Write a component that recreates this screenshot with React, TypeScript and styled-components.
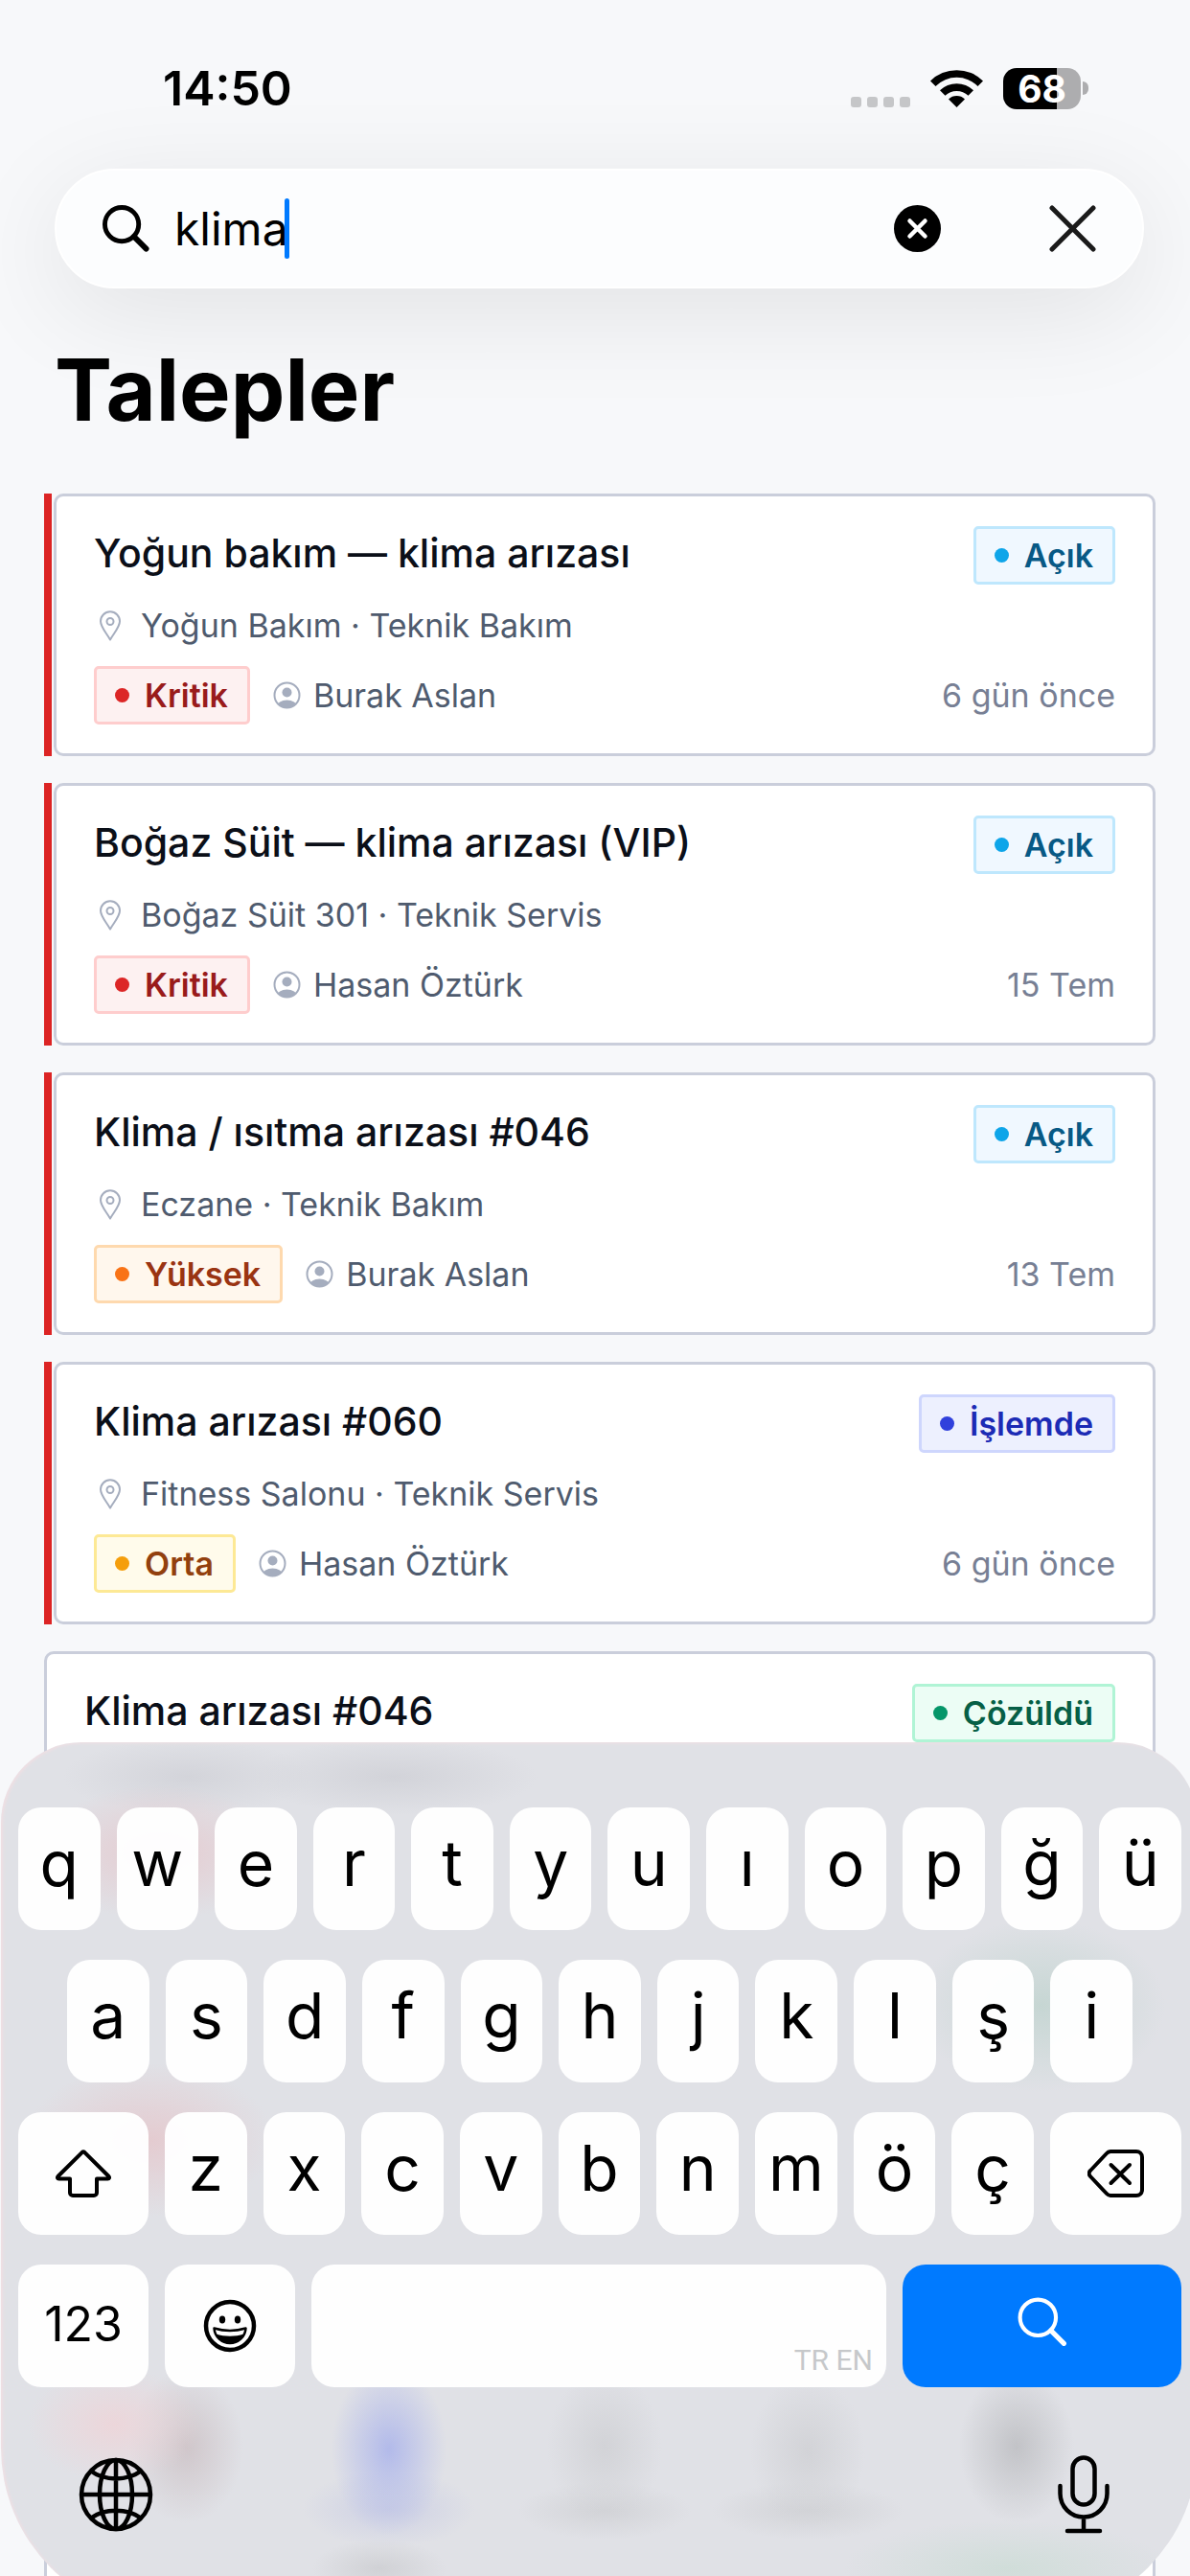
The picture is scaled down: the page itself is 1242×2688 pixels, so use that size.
import React from 'react';
import styled, { createGlobalStyle } from 'styled-components';

const sans = `Inter, "Noto Sans", sans-serif`;

const GlobalStyle = createGlobalStyle`
  *, *::before, *::after { box-sizing: border-box; }
  body { margin: 0; background: #f7f8fa; font-family: ${sans}; color: #000; }
  button, input { font: inherit; color: inherit; border: 0; padding: 0; margin: 0; background: none; }
  h1, h2, p, ul { margin: 0; padding: 0; font-weight: inherit; }
  svg { display: block; flex: none; }
`;

const Screen = styled.div`
  position: relative;
  height: 100vh;
  overflow: hidden;
`;

const StatusBar = styled.header`
  display: flex;
  justify-content: space-between;
  align-items: center;
  height: 176px;
  padding: 8px 106px 0 170px;
`;

const Clock = styled.time`
  font-size: 50px;
  font-weight: 600;
  line-height: 60px;
`;

const Indicators = styled.div`
  display: flex;
  align-items: center;
  gap: 21px;
`;

const SignalDots = styled.div`
  display: flex;
  align-self: flex-end;
  gap: 6px;
  padding-bottom: 2px;
  i { width: 11px; height: 11px; border-radius: 3px; background: #c5c6c8; }
`;

const Battery = styled.div`
  display: flex;
  align-items: center;
  gap: 2px;
  &::after { content: ''; width: 6px; height: 14px; border-radius: 0 7px 7px 0; background: #adadaf; }
`;

const BatteryBody = styled.div<{ $level: number }>`
  width: 81px;
  height: 43px;
  border-radius: 14px;
  background: linear-gradient(to right, #000 ${p => p.$level}%, #adadaf ${p => p.$level}%);
  color: #fff;
  font-size: 39px;
  font-weight: 700;
  line-height: 43px;
  text-align: center;
`;

const SearchBar = styled.form`
  display: flex;
  align-items: center;
  height: 125px;
  margin: 0 48px 0 57px;
  padding: 0 48px;
  border: 2px solid #fff;
  border-radius: 63px;
  background: #fcfdfe;
  box-shadow: 0 24px 110px rgba(0, 0, 0, 0.09);
`;

const Field = styled.label`
  position: relative;
  display: flex;
  align-items: center;
  flex: 1;
  gap: 26px;
  input {
    flex: 1;
    min-width: 0;
    height: 64px;
    font-size: 48px;
    outline: none;
    caret-color: #007aff;
  }
`;

const Caret = styled.span`
  position: absolute;
  left: 190px;
  width: 5px;
  height: 63px;
  border-radius: 3px;
  background: #007aff;
`;

const IconButton = styled.button`
  display: flex;
  align-items: center;
  justify-content: center;
`;

const CloseButton = styled(IconButton)`
  margin-left: 113px;
`;

const PageTitle = styled.h1`
  padding: 46px 57px 0;
  font-size: 90px;
  font-weight: 700;
  line-height: 120px;
`;

const List = styled.ul`
  display: flex;
  flex-direction: column;
  gap: 28px;
  padding: 48px 36px 0 46px;
  list-style: none;
`;

const Item = styled.li<{ $urgent: boolean }>`
  padding-left: ${p => (p.$urgent ? 2 : 0)}px;
  border-left: ${p => (p.$urgent ? '8px solid #dc2424' : '0')};
`;

const Card = styled.article`
  display: flex;
  flex-direction: column;
  gap: 18px;
  padding: 31px 39px 30px;
  border: 3px solid #cacedb;
  border-radius: 10px;
  background: #fff;
`;

const Row = styled.div`
  display: flex;
  align-items: center;
  justify-content: space-between;
`;

const TitleRow = styled(Row)`
  align-items: flex-start;
`;

const CardTitle = styled.h2`
  font-size: 41px;
  font-weight: 500;
  line-height: 56px;
  color: #0b0f18;
`;

const Place = styled.p`
  display: flex;
  align-items: center;
  gap: 15px;
  font-size: 34px;
  line-height: 49px;
  color: #4f5b6e;
`;

const People = styled.div`
  display: flex;
  align-items: center;
  gap: 24px;
`;

const Person = styled.span`
  display: flex;
  align-items: center;
  gap: 13px;
  font-size: 34px;
  color: #4f5b6e;
`;

const Age = styled.time`
  font-size: 34px;
  color: #777f94;
`;

type Tone = { ink: string; dot: string; line: string; fill: string };

const Badge = styled.span<{ $tone: Tone }>`
  display: flex;
  align-items: center;
  gap: 16px;
  height: 61px;
  padding: 0 20px 0 19px;
  border: 3px solid ${p => p.$tone.line};
  border-radius: 5px;
  background: ${p => p.$tone.fill};
  color: ${p => p.$tone.ink};
  font-size: 34px;
  font-weight: 600;
  &::before { content: ''; width: 15px; height: 15px; border-radius: 50%; background: ${p => p.$tone.dot}; }
`;

const HiddenRest = styled.div`
  height: 1200px;
`;

const Keyboard = styled.section`
  position: absolute;
  left: 1px;
  right: -8px;
  bottom: -43px;
  display: flex;
  flex-direction: column;
  gap: 31px;
  padding: 68px 17px 86px 18px;
  border-radius: 84px 84px 177px 177px;
  background:
    radial-gradient(ellipse 130px 70px at 165px 115px, #e5cbd0, transparent),
    radial-gradient(ellipse 130px 90px at 1085px 275px, #c6d6d3, transparent),
    radial-gradient(ellipse 130px 80px at 155px 415px, #e4cbd0, transparent),
    radial-gradient(ellipse 130px 40px at 195px 36px, #d3d4da, transparent),
    radial-gradient(ellipse 150px 40px at 410px 36px, #d2d3d9, transparent),
    radial-gradient(ellipse 60px 90px at 405px 738px, #b2baea, transparent),
    radial-gradient(ellipse 90px 40px at 405px 800px, #cdd0e4, transparent),
    radial-gradient(ellipse 90px 60px at 118px 712px, #ecd6da, transparent),
    radial-gradient(ellipse 60px 80px at 193px 735px, #cfc6ca, transparent),
    radial-gradient(ellipse 60px 80px at 630px 735px, #d2d3d7, transparent),
    radial-gradient(ellipse 90px 30px at 630px 802px, #d2d3d7, transparent),
    radial-gradient(ellipse 60px 80px at 842px 740px, #d2d3d7, transparent),
    radial-gradient(ellipse 100px 30px at 842px 802px, #d2d3d7, transparent),
    radial-gradient(ellipse 60px 80px at 1060px 735px, #c2c3c7, transparent),
    radial-gradient(ellipse 170px 50px at 1050px 862px, #d0ddd9, transparent),
    radial-gradient(ellipse 70px 30px at 395px 862px, #d0d1d5, transparent),
    #e0e1e6;
  box-shadow: inset 2px 1px 3px #f0dfe3;
`;

const KeyRow = styled.div<{ $inset?: boolean }>`
  display: flex;
  gap: 17px;
  padding: 0 ${p => (p.$inset ? 51 : 0)}px;
`;

const Key = styled.button<{ $width?: number; $primary?: boolean; $small?: boolean; $lift?: number }>`
  display: flex;
  align-items: center;
  justify-content: center;
  flex: ${p => (p.$width ? `0 0 ${p.$width}px` : '1 1 0')};
  min-width: 0;
  height: 128px;
  padding-bottom: ${p => p.$lift ?? 12}px;
  border-radius: 24px;
  background: ${p => (p.$primary ? '#007aff' : 'rgba(255, 255, 255, 0.96)')};
  color: ${p => (p.$primary ? '#fff' : '#000')};
  font-size: ${p => (p.$small ? 50 : 66)}px;
  line-height: 80px;
`;

const SpaceKey = styled(Key)`
  align-items: flex-end;
  justify-content: flex-end;
  padding: 0 14px 10px;
  color: #c6c8ca;
  font-family: "Liberation Sans Narrow", Roboto, sans-serif;
  font-size: 30px;
  line-height: 36px;
`;

const KeyboardFooter = styled.div`
  display: flex;
  align-items: center;
  justify-content: space-between;
  height: 84px;
  margin-top: 39px;
  padding: 0 75px 0 63px;
`;

const SearchIcon = ({ size, weight }: { size: number; weight: number }) => (
  <svg width={size} height={size} viewBox="0 0 50 50" fill="none" stroke="currentColor" strokeWidth={weight} strokeLinecap="round">
    <circle cx="20.500" cy="20.500" r="18" />
    <path d="M33.500 33.500 46.500 46.500" strokeWidth={weight + 1} />
  </svg>
);

const PinIcon = () => (
  <svg width="34" height="34" viewBox="0 0 34 34" fill="none" stroke="#a5adbe" strokeWidth="2">
    <path d="M17 31.500C13.500 25 7 18.500 7 12.300a10 10 0 0 1 20 0C27 18.500 20.500 25 17 31.500Z" strokeLinejoin="round" />
    <circle cx="17" cy="12.500" r="3.500" />
  </svg>
);

const PersonIcon = () => (
  <svg width="29" height="29" viewBox="0 0 29 29">
    <clipPath id="face"><circle cx="14.500" cy="14.500" r="13" /></clipPath>
    <g clipPath="url(#face)" fill="#a5adbe">
      <circle cx="14.500" cy="11.500" r="5" />
      <ellipse cx="14.500" cy="26" rx="10.500" ry="6.500" />
    </g>
    <circle cx="14.500" cy="14.500" r="13" fill="none" stroke="#a5adbe" strokeWidth="2" />
  </svg>
);

const tones: Record<string, Tone> = {
  'Açık': { ink: '#075985', dot: '#0ea5e9', line: '#bee7fd', fill: '#f0f8ff' },
  'İşlemde': { ink: '#1c2bb5', dot: '#3040dc', line: '#ced6fd', fill: '#edf0fe' },
  'Çözüldü': { ink: '#065f46', dot: '#059669', line: '#b0f4d5', fill: '#ecfdf5' },
  Kritik: { ink: '#991b1b', dot: '#dc2626', line: '#fecdcd', fill: '#fdf1f1' },
  'Yüksek': { ink: '#9a3412', dot: '#f97316', line: '#fed9ae', fill: '#fff7ed' },
  Orta: { ink: '#92400e', dot: '#f59e0b', line: '#fde995', fill: '#fffbeb' },
};

const requests = [
  { title: 'Yoğun bakım — klima arızası', state: 'Açık', place: 'Yoğun Bakım · Teknik Bakım', level: 'Kritik', person: 'Burak Aslan', age: '6 gün önce', urgent: true },
  { title: 'Boğaz Süit — klima arızası (VIP)', state: 'Açık', place: 'Boğaz Süit 301 · Teknik Servis', level: 'Kritik', person: 'Hasan Öztürk', age: '15 Tem', urgent: true },
  { title: 'Klima / ısıtma arızası #046', state: 'Açık', place: 'Eczane · Teknik Bakım', level: 'Yüksek', person: 'Burak Aslan', age: '13 Tem', urgent: true },
  { title: 'Klima arızası #060', state: 'İşlemde', place: 'Fitness Salonu · Teknik Servis', level: 'Orta', person: 'Hasan Öztürk', age: '6 gün önce', urgent: true },
  { title: 'Klima arızası #046', state: 'Çözüldü', urgent: false },
];

const letters = (row: string) => [...row].map(c => <Key key={c} type="button">{c}</Key>);

export default function App() {
  return (
    <Screen>
      <GlobalStyle />
      <StatusBar>
        <Clock>14:50</Clock>
        <Indicators>
          <SignalDots><i /><i /><i /><i /></SignalDots>
          <svg width="55" height="40" viewBox="0 0 55 40" aria-label="Wi-Fi">
            <path d="M0 12.500a39 39 0 0 1 55 0l-5.500 5.500a31 31 0 0 0-44 0Z" />
            <path d="M10 22.300a25 25 0 0 1 35 0l-5.500 5.500a17.300 17.300 0 0 0-24 0Z" />
            <path d="M19 31.500a12.300 12.300 0 0 1 17 0L27.500 40Z" />
          </svg>
          <Battery><BatteryBody $level={69}>68</BatteryBody></Battery>
        </Indicators>
      </StatusBar>

      <SearchBar onSubmit={e => e.preventDefault()}>
        <Field>
          <SearchIcon size={49} weight={5} />
          <input type="text" aria-label="Ara" defaultValue="klima" />
          <Caret />
        </Field>
        <IconButton type="button" aria-label="Temizle">
          <svg width="49" height="49" viewBox="0 0 49 49">
            <circle cx="24.500" cy="24.500" r="24.500" />
            <path d="M16.500 16.500 32.500 32.500M32.500 16.500 16.500 32.500" stroke="#fff" strokeWidth="4.500" strokeLinecap="round" />
          </svg>
        </IconButton>
        <CloseButton type="button" aria-label="Kapat">
          <svg width="49" height="49" viewBox="0 0 49 49" stroke="#1a1a1a" strokeWidth="5" strokeLinecap="round">
            <path d="M3 3 46 46M46 3 3 46" />
          </svg>
        </CloseButton>
      </SearchBar>

      <main>
        <PageTitle>Talepler</PageTitle>
        <List>
          {requests.map((r, i) => (
            <Item key={i} $urgent={r.urgent}>
              <Card>
                <TitleRow>
                  <CardTitle>{r.title}</CardTitle>
                  <Badge $tone={tones[r.state]}>{r.state}</Badge>
                </TitleRow>
                {r.place && <Place><PinIcon />{r.place}</Place>}
                {r.level ? (
                  <Row>
                    <People>
                      <Badge $tone={tones[r.level]}>{r.level}</Badge>
                      <Person><PersonIcon />{r.person}</Person>
                    </People>
                    <Age>{r.age}</Age>
                  </Row>
                ) : <HiddenRest />}
              </Card>
            </Item>
          ))}
        </List>
      </main>

      <Keyboard aria-label="Klavye">
        <KeyRow>{letters('qwertyuıopğü')}</KeyRow>
        <KeyRow $inset>{letters('asdfghjklşi')}</KeyRow>
        <KeyRow>
          <Key type="button" $width={136} $lift={0} aria-label="Shift">
            <svg width="58" height="50" viewBox="0 0 58 50" fill="none" stroke="currentColor" strokeWidth="4" strokeLinejoin="round">
              <path d="M27.800 2.800a1.800 1.800 0 0 1 2.400 0L55.500 28c1 1.200.500 2.500-1 2.500H43V45a3 3 0 0 1-3 3H18a3 3 0 0 1-3-3V30.500H3.500c-1.500 0-2-1.300-1-2.500Z" />
            </svg>
          </Key>
          {letters('zxcvbnmöç')}
          <Key type="button" $width={137} $lift={0} aria-label="Sil">
            <svg width="59" height="50" viewBox="0 0 59 50" fill="none" stroke="currentColor" strokeWidth="4" strokeLinecap="round" strokeLinejoin="round">
              <path d="M24 2H51a6 6 0 0 1 6 6V42a6 6 0 0 1-6 6H24a6 6 0 0 1-4-2L3 28a4 4 0 0 1 0-6L20 4a6 6 0 0 1 4-2Z" />
              <path d="M24.500 16 44 35M44 16 24.500 35" />
            </svg>
          </Key>
        </KeyRow>
        <KeyRow>
          <Key type="button" $width={136} $small $lift={4}>123</Key>
          <Key type="button" $width={136} $lift={0} aria-label="Emoji">
            <svg width="56" height="56" viewBox="0 0 56 56">
              <circle cx="28" cy="28" r="25" fill="none" stroke="#000" strokeWidth="4.500" />
              <ellipse cx="20" cy="21.500" rx="3.200" ry="4" />
              <ellipse cx="36" cy="21.500" rx="3.200" ry="4" />
              <path d="M11.500 30.500c10 3 23 3 33 0-.500 9-8 15.500-16.500 15.500s-16-6.500-16.500-15.500Z" fill="none" stroke="#000" strokeWidth="2.500" strokeLinejoin="round" />
              <path d="M13.500 36.500c9 3 20 3 29 0C40 42.500 34.500 46 28 46s-12-3.500-14.500-9.500Z" />
            </svg>
          </Key>
          <SpaceKey type="button">TR EN</SpaceKey>
          <Key type="button" $width={291} $lift={8} $primary aria-label="Ara">
            <SearchIcon size={52} weight={4} />
          </Key>
        </KeyRow>
        <KeyboardFooter>
          <IconButton type="button" aria-label="Klavye dili">
            <svg width="78" height="78" viewBox="0 0 78 78" fill="none" stroke="#000" strokeWidth="4.500">
              <circle cx="39" cy="39" r="36" />
              <ellipse cx="39" cy="39" rx="17" ry="36" />
              <path d="M39 3V75M3 39H75M13 14.500c14 10.500 38 10.500 52 0M13 63.500c14-10.500 38-10.500 52 0" />
            </svg>
          </IconButton>
          <IconButton type="button" aria-label="Dikte">
            <svg width="54" height="82" viewBox="0 0 54 82" fill="none" stroke="#000" strokeWidth="4.500" strokeLinecap="round">
              <rect x="15.500" y="2.500" width="23" height="49" rx="11.500" />
              <path d="M2.500 32V40a24.500 24.500 0 0 0 49 0V32M27 65V79M10 79H44" />
            </svg>
          </IconButton>
        </KeyboardFooter>
      </Keyboard>
    </Screen>
  );
}
